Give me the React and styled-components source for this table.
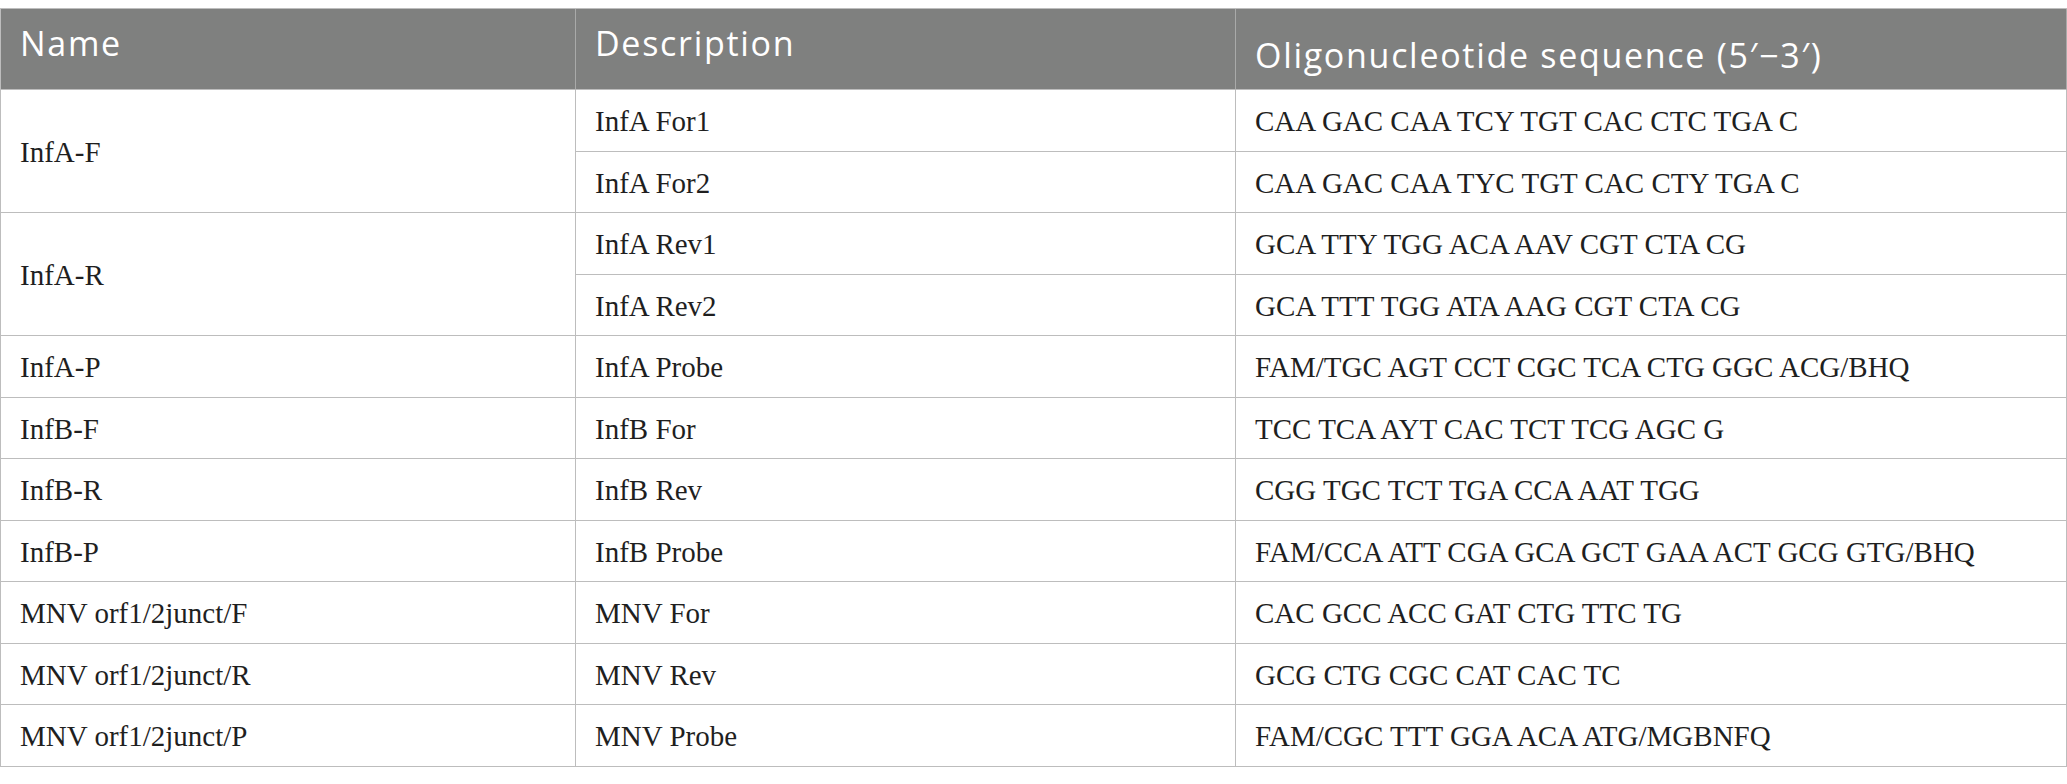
import React from "react";
import styled, { createGlobalStyle } from "styled-components";

const GlobalStyle = createGlobalStyle`
  html, body {
    margin: 0;
    padding: 0;
    background: #ffffff;
  }
  body {
    font-family: "Liberation Serif", "Times New Roman", serif;
  }
`;

const Page = styled.div`
  padding-top: 8px;
  width: 2067px;
`;

const Table = styled.div`
  display: grid;
  grid-template-columns: 575px 660px 1fr;
  grid-template-rows: 81px;
  grid-auto-rows: 61.5px;
  border-top: 1px solid #bdbdbd;
  border-left: 1px solid #bdbdbd;
  box-sizing: border-box;
  width: 2067px;
`;

const HeadCell = styled.div`
  display: flex;
  align-items: ${(p) => (p.$bottom ? "flex-end" : "flex-start")};
  box-sizing: border-box;
  padding: 11px 19px;
  background: #7f807f;
  color: #ffffff;
  border-right: 1px solid #a9aaa9;
  border-bottom: 1px solid #bdbdbd;
  font-family: "Open Sans", "Noto Sans", sans-serif;
  font-size: 34px;
  line-height: 46px;
  letter-spacing: 1.7px;
  font-weight: 400;
  white-space: nowrap;
`;

const Cell = styled.div`
  display: flex;
  align-items: center;
  box-sizing: border-box;
  padding: 2px 19px 0;
  grid-row: ${(p) => (p.$span ? `span ${p.$span}` : "auto")};
  border-right: 1px solid #bdbdbd;
  border-bottom: 1px solid #bdbdbd;
  color: #1f1f1f;
  font-family: "Liberation Serif", "Times New Roman", serif;
  font-size: 29px;
  line-height: 34px;
  white-space: nowrap;
`;

const groups = [
  {
    name: "InfA-F",
    items: [
      ["InfA For1", "CAA GAC CAA TCY TGT CAC CTC TGA C"],
      ["InfA For2", "CAA GAC CAA TYC TGT CAC CTY TGA C"],
    ],
  },
  {
    name: "InfA-R",
    items: [
      ["InfA Rev1", "GCA TTY TGG ACA AAV CGT CTA CG"],
      ["InfA Rev2", "GCA TTT TGG ATA AAG CGT CTA CG"],
    ],
  },
  {
    name: "InfA-P",
    items: [["InfA Probe", "FAM/TGC AGT CCT CGC TCA CTG GGC ACG/BHQ"]],
  },
  { name: "InfB-F", items: [["InfB For", "TCC TCA AYT CAC TCT TCG AGC G"]] },
  { name: "InfB-R", items: [["InfB Rev", "CGG TGC TCT TGA CCA AAT TGG"]] },
  {
    name: "InfB-P",
    items: [["InfB Probe", "FAM/CCA ATT CGA GCA GCT GAA ACT GCG GTG/BHQ"]],
  },
  {
    name: "MNV orf1/2junct/F",
    items: [["MNV For", "CAC GCC ACC GAT CTG TTC TG"]],
  },
  {
    name: "MNV orf1/2junct/R",
    items: [["MNV Rev", "GCG CTG CGC CAT CAC TC"]],
  },
  {
    name: "MNV orf1/2junct/P",
    items: [["MNV Probe", "FAM/CGC TTT GGA ACA ATG/MGBNFQ"]],
  },
];

export default function App() {
  return (
    <>
      <GlobalStyle />
      <Page>
        <Table>
          <HeadCell>Name</HeadCell>
          <HeadCell>Description</HeadCell>
          <HeadCell $bottom>Oligonucleotide sequence (5′−3′)</HeadCell>
          {groups.map((g) =>
            g.items.map(([desc, seq], i) => (
              <React.Fragment key={g.name + desc}>
                {i === 0 && <Cell $span={g.items.length}>{g.name}</Cell>}
                <Cell>{desc}</Cell>
                <Cell>{seq}</Cell>
              </React.Fragment>
            ))
          )}
        </Table>
      </Page>
    </>
  );
}
